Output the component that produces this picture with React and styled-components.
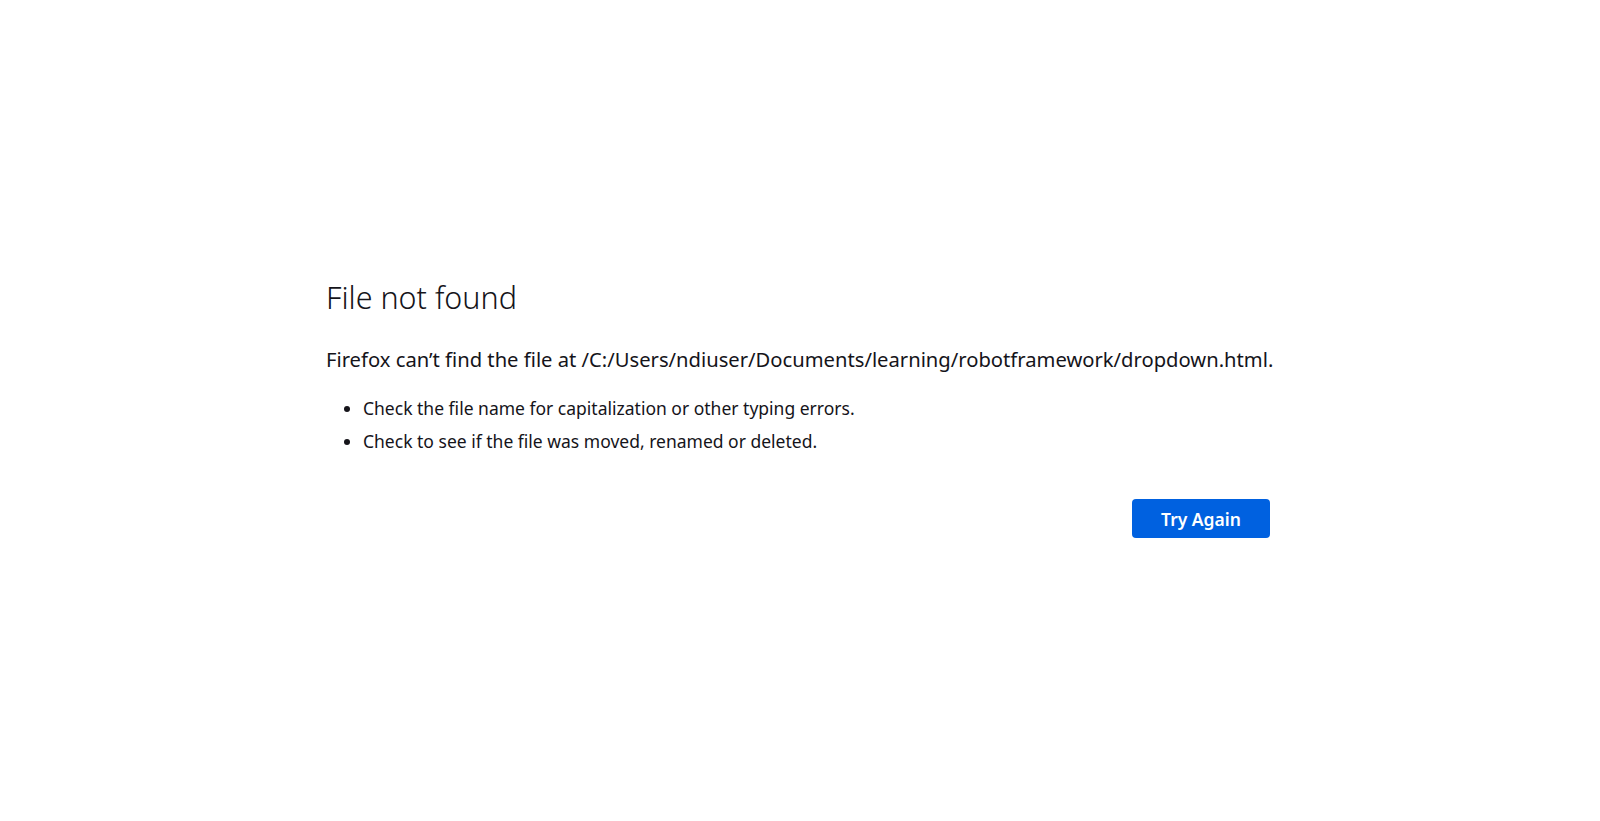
import React from 'react';
import styled, { createGlobalStyle } from 'styled-components';

const GlobalStyle = createGlobalStyle`
  html, body {
    margin: 0;
    padding: 0;
    background: #ffffff;
  }
  body {
    font-family: 'Noto Sans', 'Open Sans', sans-serif;
    color: #15141a;
  }
`;

const Page = styled.main`
  min-height: 100vh;
  box-sizing: border-box;
  padding: 277px 4px 0 0;
  display: flex;
  justify-content: center;
`;

const Container = styled.div`
  width: 944px;
  display: flex;
  flex-direction: column;
`;

const Title = styled.h1`
  margin: 0;
  font-size: 30.5px;
  line-height: 40px;
  font-weight: 300;
  color: #15141a;
`;

const Description = styled.p`
  margin: 28px 0 0;
  font-size: 20.2px;
  line-height: 28px;
  white-space: nowrap;
`;

const Hints = styled.ul`
  margin: 19px 0 0;
  padding: 0 0 0 37px;
  font-size: 17.5px;
  line-height: 33px;
`;

const Hint = styled.li`
  padding-left: 0;
`;

const ButtonRow = styled.div`
  display: flex;
  justify-content: flex-end;
  margin-top: 41px;
`;

const Button = styled.button`
  width: 138px;
  height: 39px;
  padding: 0;
  border: none;
  border-radius: 4px;
  background: #0061e0;
  color: #ffffff;
  font-family: 'Noto Sans', 'Open Sans', sans-serif;
  font-size: 17.5px;
  font-weight: 600;
  cursor: pointer;
`;

export default function App() {
  return (
    <>
      <GlobalStyle />
      <Page>
        <Container>
          <Title>File not found</Title>
          <Description>
            Firefox can’t find the file at /C:/Users/ndiuser/Documents/learning/robotframework/dropdown.html.
          </Description>
          <Hints>
            <Hint>Check the file name for capitalization or other typing errors.</Hint>
            <Hint>Check to see if the file was moved, renamed or deleted.</Hint>
          </Hints>
          <ButtonRow>
            <Button>Try Again</Button>
          </ButtonRow>
        </Container>
      </Page>
    </>
  );
}
